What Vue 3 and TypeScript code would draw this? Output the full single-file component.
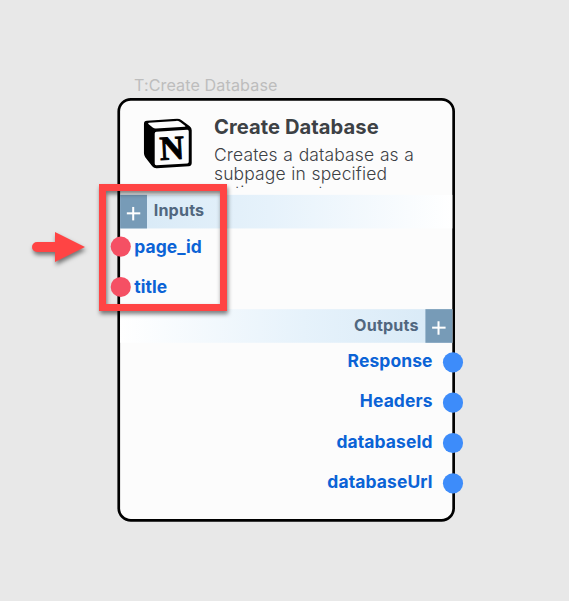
<script setup lang="ts">
interface Port {
  name: string
}

const caption = 'T:Create Database'
const title = 'Create Database'
const description = 'Creates a database as a subpage in specified notion parent page.'

const inputs: Port[] = [{ name: 'page_id' }, { name: 'title' }]
const outputs: Port[] = [
  { name: 'Response' },
  { name: 'Headers' },
  { name: 'databaseId' },
  { name: 'databaseUrl' },
]
</script>

<template>
  <main class="canvas">
    <section class="node">
      <div class="caption">{{ caption }}</div>
      <header class="head">
        <svg class="logo" viewBox="0 0 50 52" aria-hidden="true">
          <path
            d="M4 2.6 L34 .6 Q36.500 .4 38.500 1.800 L47 8 Q49 9.400 49 12 V45 Q49 48 46 48.300 L14 50.200 Q11 50.400 9.300 48.200 L2.300 39.200 Q1 37.500 1 35 V5.600 Q1 2.800 4 2.600Z"
            fill="#000"
          />
          <path d="M6 4.500 L33.500 2.700 Q35.500 2.600 37 3.600 L42.300 7.500 Q43.200 8.400 42 8.500 L13 10.300 Q11.200 10.400 9.800 9.300 L5.500 5.800 Q4.500 4.700 6 4.500Z" fill="#fcfcfc" />
          <path d="M13.500 13.600 L44.500 11.700 Q46 11.600 46 13.200 V43.800 Q46 45.300 44.500 45.400 L13.500 47.200 Q11.800 47.300 11.800 45.600 V15.400 Q11.800 13.700 13.500 13.600Z" fill="#fcfcfc" />
          <text class="mark" x="29" y="41.500" text-anchor="middle" transform="rotate(-3 29 30)">N</text>
        </svg>
        <div class="about">
          <h1 class="title">{{ title }}</h1>
          <p class="description">{{ description }}</p>
        </div>
      </header>

      <div class="bar bar-in">
        <span class="add"></span>
        <span class="bar-name">Inputs</span>
      </div>
      <ul class="ports">
        <li v-for="port in inputs" :key="port.name" class="port">
          <i class="dot dot-in"></i>
          <span>{{ port.name }}</span>
        </li>
      </ul>

      <div class="bar bar-out">
        <span class="bar-name">Outputs</span>
        <span class="add"></span>
      </div>
      <ul class="ports">
        <li v-for="port in outputs" :key="port.name" class="port port-out">
          <span>{{ port.name }}</span>
          <i class="dot dot-out"></i>
        </li>
      </ul>
    </section>

    <div class="highlight"></div>
    <svg class="arrow" viewBox="0 0 53 32" aria-hidden="true">
      <path d="M5 11 H23 V1 L53 16 L23 31 V21 H5 A5 5 0 0 1 5 11Z" fill="#ff4444" />
    </svg>
  </main>
</template>

<style>
body {
  background: #e8e8e8;
}
</style>

<style scoped>
.canvas {
  position: relative;
  height: 601px;
  overflow: hidden;
  background: #e8e8e8;
  font-family: Inter, "Liberation Sans", sans-serif;
}

/* The node is laid out at 100% and shown at the canvas zoom level. */
.node {
  position: absolute;
  left: 0;
  top: 0;
  box-sizing: border-box;
  width: 251px;
  height: 315px;
  border: 2px solid #000;
  border-radius: 10px;
  background: #fcfcfc;
  transform: translate(117.400px, 98px) scale(1.345);
  transform-origin: 0 0;
}

.caption {
  position: absolute;
  left: 10.300px;
  top: -19px;
  font-size: 12px;
  line-height: 15px;
  letter-spacing: 0.070px;
  color: #bdbdbd;
  white-space: nowrap;
}

.head {
  display: flex;
  box-sizing: border-box;
  height: 70px;
  padding: 12px 10px 5px 17px;
  overflow: hidden;
}

.logo {
  flex: none;
  width: 37px;
  height: 38.500px;
  margin-top: 1px;
}

.mark {
  font: bold 34px "Liberation Serif", serif;
  fill: #000;
  stroke: #000;
  stroke-width: 0.900px;
}

.about {
  margin-left: 15.800px;
  color: #3d4145;
  overflow: hidden;
}

.title {
  margin: 0;
  font-size: 15px;
  font-weight: 650;
  line-height: 16px;
  letter-spacing: 0.040px;
}

.description {
  margin: 4.500px 0 0;
  width: 165px;
  font-size: 13px;
  font-weight: 300;
  line-height: 14px;
  letter-spacing: 0.100px;
  word-spacing: 0.400px;
}

.bar {
  display: flex;
  align-items: center;
  height: 25px;
  gap: 5px;
  font-size: 12px;
  font-weight: 650;
  letter-spacing: 0.120px;
  color: #51677f;
}

.bar-name {
  padding-bottom: 1.400px;
}

.bar-in {
  background: linear-gradient(to right, #d7e9f6, #e6f2fb 45%, #fff);
}

.bar-out {
  justify-content: flex-end;
  background: linear-gradient(to left, #d7e9f6, #e6f2fb 45%, #fff);
}

.add {
  width: 20px;
  height: 25px;
  background: linear-gradient(#fff, #fff) 50% 13px / 10px 1.500px no-repeat,
    linear-gradient(#fff, #fff) 50% 8.700px / 1.500px 10px no-repeat,
    #779bb7;
}

.ports {
  margin: 0;
  padding: 0;
  list-style: none;
}

.port {
  position: relative;
  display: flex;
  box-sizing: border-box;
  height: 30px;
  padding: 5.500px 10.500px 0;
  font-size: 13px;
  font-weight: 650;
  line-height: 15px;
  letter-spacing: 0.060px;
  color: #0b63d6;
}

.port-out {
  justify-content: flex-end;
  padding-right: 14.700px;
}

.dot {
  position: absolute;
  top: 6px;
  width: 15px;
  height: 15px;
  border-radius: 50%;
}

.dot-in {
  left: -7px;
  background: #f55064;
}

.dot-out {
  top: 6.500px;
  right: -8px;
  background: #3d8cfa;
}

.highlight {
  position: absolute;
  left: 99px;
  top: 184px;
  box-sizing: border-box;
  width: 128px;
  height: 127px;
  border: 7px solid #ff4444;
  filter: drop-shadow(1px 3px 2px rgba(0, 0, 0, 0.5));
}

.arrow {
  position: absolute;
  left: 32px;
  top: 231px;
  width: 53px;
  height: 32px;
  overflow: visible;
  filter: drop-shadow(1px 3px 2px rgba(0, 0, 0, 0.5));
}
</style>
